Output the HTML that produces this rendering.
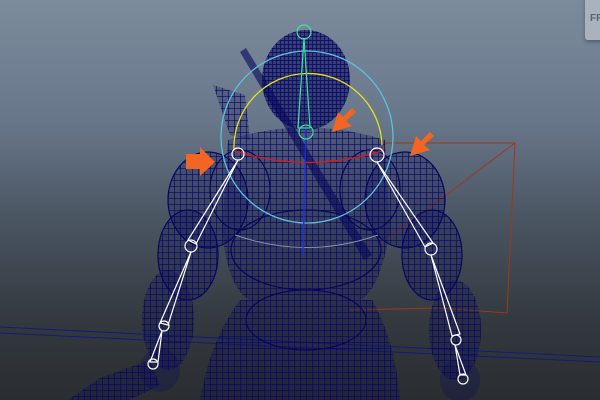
<!DOCTYPE html>
<html><head><style>
html,body{margin:0;padding:0;width:600px;height:400px;overflow:hidden;}
body{background:linear-gradient(#7c8b9c 0%,#68778a 30%,#4a5562 55%,#33393f 80%,#2a2d31 100%);font-family:"Liberation Sans",sans-serif;position:relative;}
.fr{position:absolute;left:585px;top:-5px;width:30px;height:45px;background:#a9b3bf;border-radius:3px;box-shadow:0 2px 4px rgba(0,0,0,.3);color:#5a6470;font-size:10px;font-weight:bold;padding:18px 0 0 5px;box-sizing:border-box;}
</style></head><body>
<div class="fr">FR</div>
<svg width="600" height="400" style="position:absolute;left:0;top:0">
<defs>
<pattern id="m" width="6" height="6" patternUnits="userSpaceOnUse">
<path d="M0 0H6M0 0V6" stroke="#06065e" stroke-width="1.3"/>
</pattern>
<pattern id="d" width="4" height="4" patternUnits="userSpaceOnUse">
<path d="M0 0H4M0 0V4" stroke="#06065e" stroke-width="1.4"/>
</pattern>
</defs>
<line x1="0" y1="327" x2="600" y2="357" stroke="#121a80" stroke-width="1"/>
<line x1="0" y1="333" x2="600" y2="362" stroke="#121a80" stroke-width="1"/>
<g stroke="#a03818" stroke-width="1" fill="none">
<path d="M380 143H515L507 313L440 308"/>
<path d="M515 143L380 245"/>
<path d="M350 310L440 308"/>
</g>
<g fill="#06065e" fill-opacity="0.25">
<path d="M213 85L245 95L250 140L230 135Z"/>
<path d="M228 140Q305 115 385 140L390 230Q380 290 360 300L250 300Q228 290 222 230Z"/>
<ellipse cx="208" cy="200" rx="40" ry="48"/>
<ellipse cx="405" cy="200" rx="40" ry="48"/>
<ellipse cx="188" cy="255" rx="30" ry="45"/>
<ellipse cx="432" cy="255" rx="30" ry="45"/>
<ellipse cx="168" cy="320" rx="26" ry="50"/>
<ellipse cx="455" cy="330" rx="26" ry="50"/>
<ellipse cx="160" cy="370" rx="20" ry="22"/>
<ellipse cx="460" cy="380" rx="20" ry="22"/>
<path d="M68 400L100 378L150 360L160 385L130 400Z"/>
<path d="M240 300L372 300Q395 340 400 400H200Q210 340 240 300Z"/>
<ellipse cx="306" cy="80" rx="44" ry="50" fill-opacity="0.55"/>
<path d="M240 52L246 48L372 255L364 260Z" fill-opacity="0.6"/>
</g>
<g fill="url(#m)">
<path d="M228 140Q305 115 385 140L390 230Q380 290 360 300L250 300Q228 290 222 230Z"/>
<ellipse cx="208" cy="200" rx="40" ry="48"/>
<ellipse cx="405" cy="200" rx="40" ry="48"/>
<ellipse cx="188" cy="255" rx="30" ry="45"/>
<ellipse cx="432" cy="255" rx="30" ry="45"/>
<ellipse cx="168" cy="320" rx="26" ry="50"/>
<ellipse cx="455" cy="330" rx="26" ry="50"/>
<path d="M68 400L100 378L150 360L160 385L130 400Z"/>
<path d="M240 300L372 300Q395 340 400 400H200Q210 340 240 300Z"/>
<path d="M213 85L245 95L250 140L230 135Z"/>
</g>
<ellipse cx="306" cy="80" rx="44" ry="50" fill="url(#d)"/>
<g fill="none" stroke="#06065e" stroke-width="1.2">
<ellipse cx="208" cy="200" rx="40" ry="48"/>
<ellipse cx="405" cy="200" rx="40" ry="48"/>
<ellipse cx="188" cy="255" rx="30" ry="45"/>
<ellipse cx="432" cy="255" rx="30" ry="45"/>
<ellipse cx="240" cy="190" rx="30" ry="40"/>
<ellipse cx="370" cy="190" rx="30" ry="40"/>
<ellipse cx="306" cy="250" rx="75" ry="40"/>
<ellipse cx="306" cy="320" rx="60" ry="30"/>
</g>
<circle cx="307" cy="137" r="86" fill="none" stroke="#5cc0e0" stroke-width="1.3"/>
<path d="M234 150A74 74 0 0 1 382 145" fill="none" stroke="#e0e020" stroke-width="1.3"/>
<path d="M232 150Q307 175 384 150" fill="none" stroke="#e01818" stroke-width="1.3"/>
<path d="M235 235Q307 260 378 235" fill="none" stroke="#8890a8" stroke-width="1"/>
<line x1="306" y1="128" x2="303" y2="255" stroke="#1830f0" stroke-width="1.3"/>
<g stroke="#40e0a0" stroke-width="1.2" fill="none">
<circle cx="304" cy="32" r="7"/>
<path d="M304 38L298 128L310 128Z"/>
<circle cx="306" cy="132" r="7"/>
</g>
<g stroke="#ffffff" stroke-width="1.2" fill="none">
<circle cx="238" cy="154" r="6"/>
<path d="M238 160L188 240L196 244Z"/>
<circle cx="191" cy="246" r="6"/>
<path d="M191 252L160 323L168 325Z"/>
<circle cx="164" cy="326" r="5"/>
<path d="M162 331L150 362L158 362Z"/>
<circle cx="153" cy="364" r="5"/>
<circle cx="377" cy="155" r="7"/>
<path d="M377 162L425 247L433 243Z"/>
<circle cx="431" cy="249" r="6"/>
<path d="M431 255L452 336L460 334Z"/>
<circle cx="456" cy="340" r="5"/>
<path d="M455 345L460 375L466 375Z"/>
<circle cx="463" cy="379" r="5"/>
</g>
<g fill="#f26522">
<path d="M186 154H200V147L215 162L200 176V169H186Z"/>
<path d="M356 112L346 121L352 126L332 132L338 112L343 117L352 108Z"/>
<path d="M434 136L424 145L430 150L410 156L416 136L421 141L430 132Z"/>
</g>
</svg>
</body></html>
